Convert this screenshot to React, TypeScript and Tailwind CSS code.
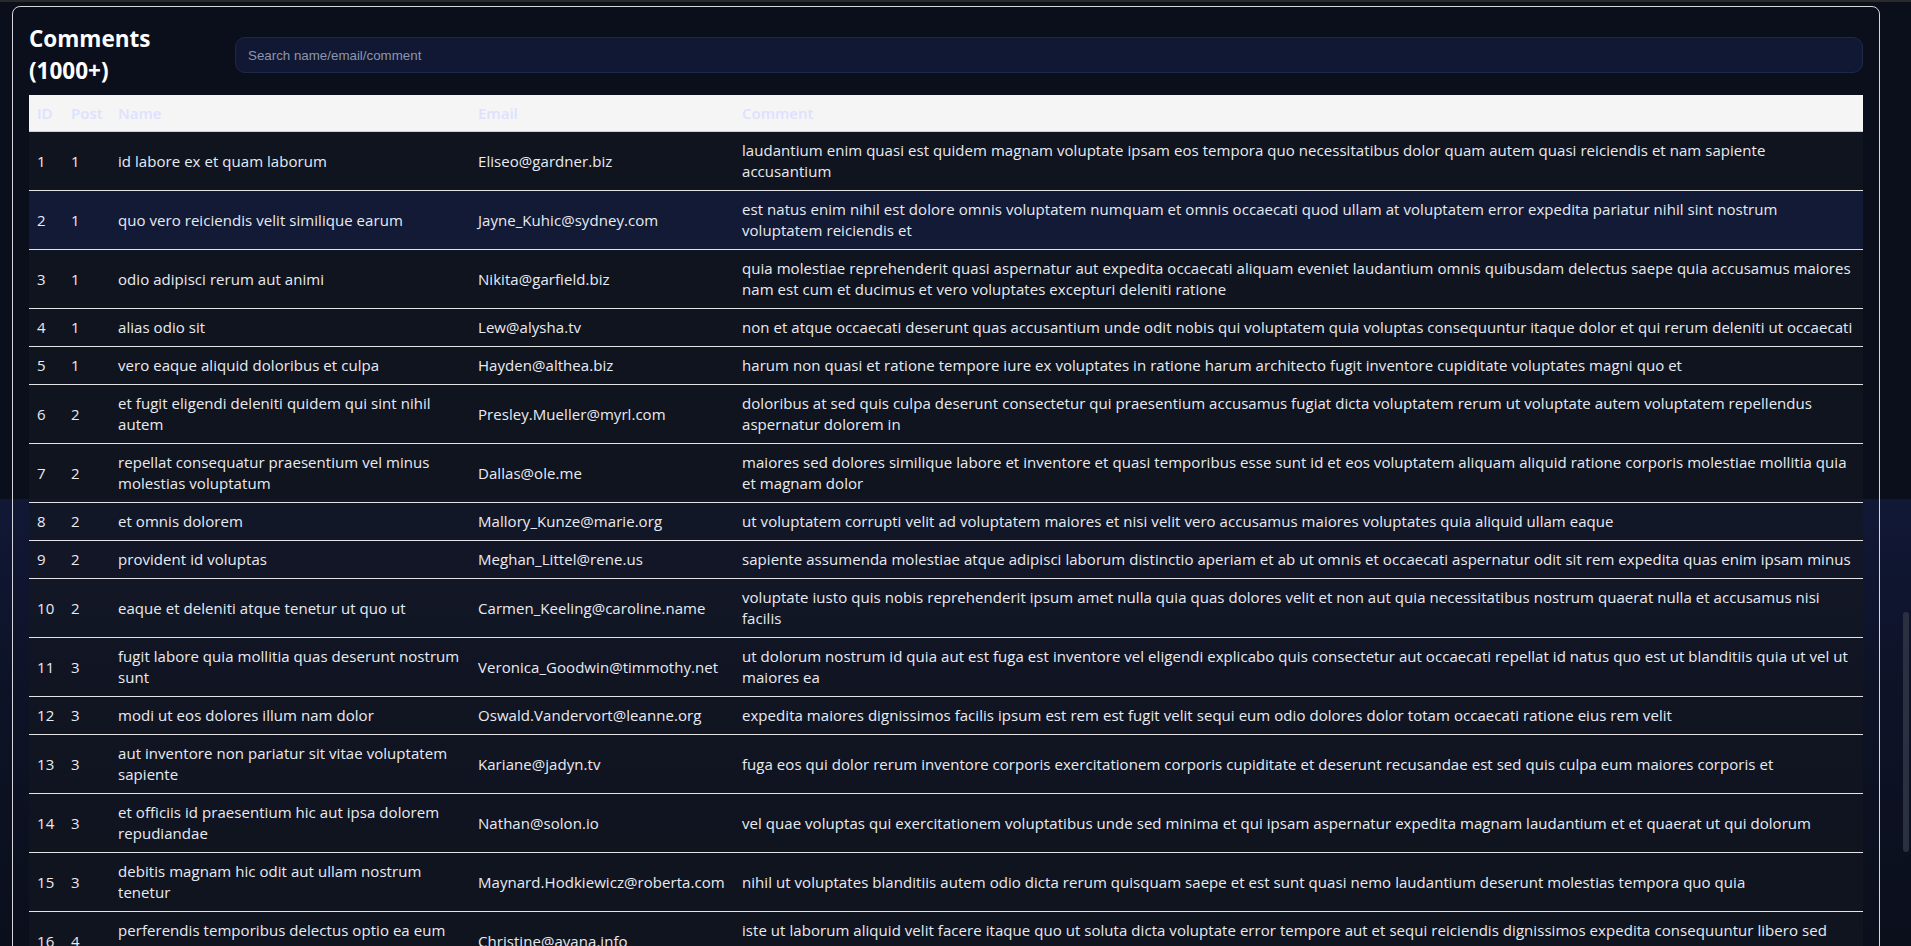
import { useState } from "react"

type Comment = {
  postId: number
  id: number
  name: string
  email: string
  body: string
}

const comments: Comment[] = [
  { postId: 1, id: 1, name: "id labore ex et quam laborum", email: "Eliseo@gardner.biz", body: "laudantium enim quasi est quidem magnam voluptate ipsam eos tempora quo necessitatibus dolor quam autem quasi reiciendis et nam sapiente accusantium" },
  { postId: 1, id: 2, name: "quo vero reiciendis velit similique earum", email: "Jayne_Kuhic@sydney.com", body: "est natus enim nihil est dolore omnis voluptatem numquam et omnis occaecati quod ullam at voluptatem error expedita pariatur nihil sint nostrum voluptatem reiciendis et" },
  { postId: 1, id: 3, name: "odio adipisci rerum aut animi", email: "Nikita@garfield.biz", body: "quia molestiae reprehenderit quasi aspernatur aut expedita occaecati aliquam eveniet laudantium omnis quibusdam delectus saepe quia accusamus maiores nam est cum et ducimus et vero voluptates excepturi deleniti ratione" },
  { postId: 1, id: 4, name: "alias odio sit", email: "Lew@alysha.tv", body: "non et atque occaecati deserunt quas accusantium unde odit nobis qui voluptatem quia voluptas consequuntur itaque dolor et qui rerum deleniti ut occaecati" },
  { postId: 1, id: 5, name: "vero eaque aliquid doloribus et culpa", email: "Hayden@althea.biz", body: "harum non quasi et ratione tempore iure ex voluptates in ratione harum architecto fugit inventore cupiditate voluptates magni quo et" },
  { postId: 2, id: 6, name: "et fugit eligendi deleniti quidem qui sint nihil autem", email: "Presley.Mueller@myrl.com", body: "doloribus at sed quis culpa deserunt consectetur qui praesentium accusamus fugiat dicta voluptatem rerum ut voluptate autem voluptatem repellendus aspernatur dolorem in" },
  { postId: 2, id: 7, name: "repellat consequatur praesentium vel minus molestias voluptatum", email: "Dallas@ole.me", body: "maiores sed dolores similique labore et inventore et quasi temporibus esse sunt id et eos voluptatem aliquam aliquid ratione corporis molestiae mollitia quia et magnam dolor" },
  { postId: 2, id: 8, name: "et omnis dolorem", email: "Mallory_Kunze@marie.org", body: "ut voluptatem corrupti velit ad voluptatem maiores et nisi velit vero accusamus maiores voluptates quia aliquid ullam eaque" },
  { postId: 2, id: 9, name: "provident id voluptas", email: "Meghan_Littel@rene.us", body: "sapiente assumenda molestiae atque adipisci laborum distinctio aperiam et ab ut omnis et occaecati aspernatur odit sit rem expedita quas enim ipsam minus" },
  { postId: 2, id: 10, name: "eaque et deleniti atque tenetur ut quo ut", email: "Carmen_Keeling@caroline.name", body: "voluptate iusto quis nobis reprehenderit ipsum amet nulla quia quas dolores velit et non aut quia necessitatibus nostrum quaerat nulla et accusamus nisi facilis" },
  { postId: 3, id: 11, name: "fugit labore quia mollitia quas deserunt nostrum sunt", email: "Veronica_Goodwin@timmothy.net", body: "ut dolorum nostrum id quia aut est fuga est inventore vel eligendi explicabo quis consectetur aut occaecati repellat id natus quo est ut blanditiis quia ut vel ut maiores ea" },
  { postId: 3, id: 12, name: "modi ut eos dolores illum nam dolor", email: "Oswald.Vandervort@leanne.org", body: "expedita maiores dignissimos facilis ipsum est rem est fugit velit sequi eum odio dolores dolor totam occaecati ratione eius rem velit" },
  { postId: 3, id: 13, name: "aut inventore non pariatur sit vitae voluptatem sapiente", email: "Kariane@jadyn.tv", body: "fuga eos qui dolor rerum inventore corporis exercitationem corporis cupiditate et deserunt recusandae est sed quis culpa eum maiores corporis et" },
  { postId: 3, id: 14, name: "et officiis id praesentium hic aut ipsa dolorem repudiandae", email: "Nathan@solon.io", body: "vel quae voluptas qui exercitationem voluptatibus unde sed minima et qui ipsam aspernatur expedita magnam laudantium et et quaerat ut qui dolorum" },
  { postId: 3, id: 15, name: "debitis magnam hic odit aut ullam nostrum tenetur", email: "Maynard.Hodkiewicz@roberta.com", body: "nihil ut voluptates blanditiis autem odio dicta rerum quisquam saepe et est sunt quasi nemo laudantium deserunt molestias tempora quo quia" },
  { postId: 4, id: 16, name: "perferendis temporibus delectus optio ea eum ratione dolorum", email: "Christine@ayana.info", body: "iste ut laborum aliquid velit facere itaque quo ut soluta dicta voluptate error tempore aut et sequi reiciendis dignissimos expedita consequuntur libero sed fugiat facilis" },
  { postId: 4, id: 17, name: "eos est animi quis", email: "Preston_Hudson@blaise.tv", body: "consequuntur quia voluptate assumenda et non ut voluptas at quia ea provident quis distinctio tempora iure" },
  { postId: 4, id: 18, name: "aut et tenetur ducimus illum aut nulla ab", email: "Vincenza_Klocko@albertha.name", body: "veritatis voluptates necessitatibus maiores corrupti neque et exercitationem amet sit et ullam velit sit magnam laborum magni ut molestias" },
]

export default function App() {
  const [query, setQuery] = useState("")
  const [hovered, setHovered] = useState<number | null>(2)

  const q = query.trim().toLowerCase()
  const rows = q
    ? comments.filter(
        (c) =>
          c.name.toLowerCase().includes(q) ||
          c.email.toLowerCase().includes(q) ||
          c.body.toLowerCase().includes(q)
      )
    : comments

  return (
    <div className="flex h-screen flex-col overflow-hidden bg-[linear-gradient(180deg,#0b0f1c_0px,#0b0f1c_499px,#111836_499px,#0d1226_700px,#0b0f1c_946px)] font-['Open_Sans',sans-serif] text-[#e9ebf2]">
      <div className="h-[2px] shrink-0 bg-[#2a2a2a]" />
      <div className="flex min-h-0 flex-1">
        <main className="min-w-0 flex-1 overflow-hidden">
          <div className="ml-3 mr-[14px] mt-1 rounded-lg border border-[#d6d6da] p-4">
            <div className="mb-2 flex items-center gap-6">
              <h1 className="w-[182px] shrink-0 text-[22.5px] leading-8 font-bold text-white">
                Comments (1000+)
              </h1>
              <input
                type="text"
                value={query}
                onChange={(e) => setQuery(e.target.value)}
                placeholder="Search name/email/comment"
                className="h-9 flex-1 rounded-[10px] border border-[#1f2849] bg-[#111833] px-3 font-['Liberation_Sans',Arial,sans-serif] text-[13.33px] text-white outline-none placeholder:text-[#8d95ae]"
              />
            </div>

            <table className="w-full table-fixed border-collapse text-left text-[15px] leading-[21px]">
              <colgroup>
                <col className="w-[34px]" />
                <col className="w-[47px]" />
                <col className="w-[360px]" />
                <col className="w-[264px]" />
                <col />
              </colgroup>
              <thead>
                <tr className="border-b border-[#cfcfcf] bg-[#f5f5f5] text-[#dde1ff]">
                  <th className="px-2 py-2 leading-5 font-semibold">ID</th>
                  <th className="px-2 py-2 leading-5 font-semibold">Post</th>
                  <th className="px-2 py-2 leading-5 font-semibold">Name</th>
                  <th className="px-2 py-2 leading-5 font-semibold">Email</th>
                  <th className="px-2 py-2 leading-5 font-semibold">Comment</th>
                </tr>
              </thead>
              <tbody className="tracking-[0.05px]">
                {rows.map((c) => (
                  <tr
                    key={c.id}
                    onMouseEnter={() => setHovered(c.id)}
                    onMouseLeave={() => setHovered(null)}
                    className={`border-b border-[#e4e4e6] ${
                      hovered === c.id ? "bg-[#121a36]" : "bg-[rgba(20,23,32,0.6)]"
                    }`}
                  >
                    <td className="px-2 py-2 align-middle">{c.id}</td>
                    <td className="px-2 py-2 align-middle">{c.postId}</td>
                    <td className="px-2 py-2 align-middle">{c.name}</td>
                    <td className="px-2 py-2 align-middle whitespace-nowrap">{c.email}</td>
                    <td className="px-2 py-2 align-middle">{c.body}</td>
                  </tr>
                ))}
              </tbody>
            </table>
          </div>
        </main>

        <div className="w-[17px] shrink-0">
          <div className="ml-[9px] mt-[610px] h-[240px] w-[6px] rounded-full bg-[#2b3040]" />
        </div>
      </div>
    </div>
  )
}
